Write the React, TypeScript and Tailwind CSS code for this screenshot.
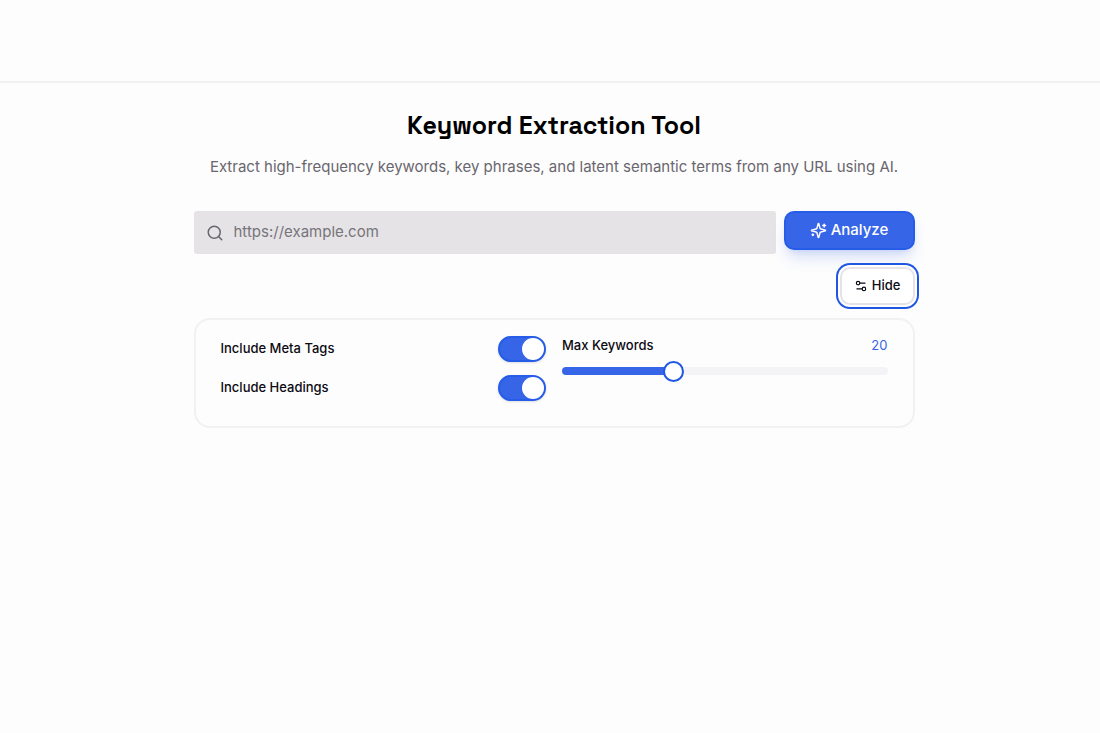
import { useState } from "react";
import { Search, Settings2 } from "lucide-react";

const MIN_KEYWORDS = 5;
const MAX_KEYWORDS = 50;

type ToggleProps = {
  id: string;
  label: string;
  checked: boolean;
  onChange: (checked: boolean) => void;
};

function Toggle({ id, label, checked, onChange }: ToggleProps) {
  return (
    <div className="flex items-center justify-between">
      <label htmlFor={id} className="text-[13px] font-medium">
        {label}
      </label>
      <input
        id={id}
        type="checkbox"
        role="switch"
        checked={checked}
        onChange={(e) => onChange(e.target.checked)}
        className="flex h-[26px] w-12 cursor-pointer appearance-none items-center rounded-full border-2 border-transparent bg-gray-200 shadow-sm before:size-[22px] before:rounded-full before:bg-white checked:border-[#255ce8] checked:bg-[#3765e8] checked:before:translate-x-[22px]"
      />
    </div>
  );
}

function SparklesIcon() {
  return (
    <svg
      width="17"
      height="17"
      viewBox="0 0 24 24"
      fill="none"
      stroke="currentColor"
      strokeWidth="2"
      strokeLinecap="round"
      strokeLinejoin="round"
      aria-hidden="true"
    >
      <path d="M9.937 15.5A2 2 0 0 0 8.5 14.063l-6.135-1.582a.5.5 0 0 1 0-.962L8.5 9.936A2 2 0 0 0 9.937 8.5l1.582-6.135a.5.5 0 0 1 .963 0L14.063 8.5A2 2 0 0 0 15.5 9.937l6.135 1.581a.5.5 0 0 1 0 .964L15.5 14.063a2 2 0 0 0-1.437 1.437l-1.582 6.135a.5.5 0 0 1-.963 0z" />
      <path d="M20 3v4" />
      <path d="M22 5h-4" />
      <path d="M4 17v2" />
      <path d="M5 18H3" />
    </svg>
  );
}

export default function App() {
  const [url, setUrl] = useState("");
  const [showOptions, setShowOptions] = useState(true);
  const [metaTags, setMetaTags] = useState(true);
  const [headings, setHeadings] = useState(true);
  const [maxKeywords, setMaxKeywords] = useState(20);

  const filled = ((maxKeywords - MIN_KEYWORDS) / (MAX_KEYWORDS - MIN_KEYWORDS)) * 100;

  return (
    <div className="min-h-screen bg-[#fdfdfd] font-['Inter',sans-serif] text-[#0c0a12]">
      <header className="h-[83px] border-b-2 border-[#f1f0f3]" />

      <main className="pl-2">
        <div className="mx-auto max-w-[721px] pt-6">
          {/* Title */}
          <div className="text-center">
            <h1 className="font-['Space_Grotesk','Inter',sans-serif] text-[25px] leading-9 font-semibold text-black">
              Keyword Extraction Tool
            </h1>
            <p className="mt-3 text-[15px] leading-6 text-[#69666e]">
              Extract high-frequency keywords, key phrases, and latent semantic
              terms from any URL using AI.
            </p>
          </div>

          {/* URL form */}
          <form
            className="mt-8 flex items-start gap-2"
            onSubmit={(e) => e.preventDefault()}
          >
            <label className="flex h-[43px] flex-1 items-center gap-2.5 rounded-[3px] bg-[#e5e3e6] px-3 text-[#69666e]">
              <Search size={18} className="shrink-0" />
              <input
                type="url"
                aria-label="Website URL"
                value={url}
                onChange={(e) => setUrl(e.target.value)}
                placeholder="https://example.com"
                className="w-full bg-transparent text-[15px] outline-none placeholder:text-[#77747b]"
              />
            </label>
            <button
              type="submit"
              className="flex h-[39px] w-[131px] items-center justify-center gap-1 rounded-[10px] border-2 border-[#255ce8] bg-[#3765e8] text-[15px] font-medium text-white shadow-lg shadow-[#3765e8]/20"
            >
              <SparklesIcon />
              Analyze
            </button>
          </form>

          <div className="mt-[13px] flex justify-end">
            <button
              type="button"
              onClick={() => setShowOptions(!showOptions)}
              className="flex h-[38px] items-center gap-1 rounded-[10px] border-2 border-[#e5e3e8] bg-white px-3 text-[13px] font-medium ring-2 ring-[#1f57e3] ring-offset-2"
            >
              <Settings2 size={14} />
              {showOptions ? "Hide" : "Show"}
            </button>
          </div>

          {/* Options */}
          {showOptions && (
            <div className="mt-[13px] grid grid-cols-2 gap-4 rounded-2xl border-2 border-[#f1f0f3] px-[25px] pt-4 pb-[25px]">
              <div className="space-y-[13px]">
                <Toggle
                  id="meta-tags"
                  label="Include Meta Tags"
                  checked={metaTags}
                  onChange={setMetaTags}
                />
                <Toggle
                  id="headings"
                  label="Include Headings"
                  checked={headings}
                  onChange={setHeadings}
                />
              </div>
              <div>
                <div className="flex items-center justify-between text-[13px] leading-[18px]">
                  <label htmlFor="max-keywords" className="font-medium">
                    Max Keywords
                  </label>
                  <span className="text-[#3765e8]">{maxKeywords}</span>
                </div>
                <input
                  id="max-keywords"
                  type="range"
                  min={MIN_KEYWORDS}
                  max={MAX_KEYWORDS}
                  value={maxKeywords}
                  onChange={(e) => setMaxKeywords(Number(e.target.value))}
                  style={{
                    backgroundImage: `linear-gradient(to right, #3765e8 ${filled}%, #f4f3f5 ${filled}%)`,
                  }}
                  className="mt-[13px] block h-2 w-full cursor-pointer appearance-none rounded-full [&::-webkit-slider-thumb]:size-[21px] [&::-webkit-slider-thumb]:appearance-none [&::-webkit-slider-thumb]:rounded-full [&::-webkit-slider-thumb]:border-2 [&::-webkit-slider-thumb]:border-[#1f57e3] [&::-webkit-slider-thumb]:bg-white"
                />
              </div>
            </div>
          )}
        </div>
      </main>
    </div>
  );
}
